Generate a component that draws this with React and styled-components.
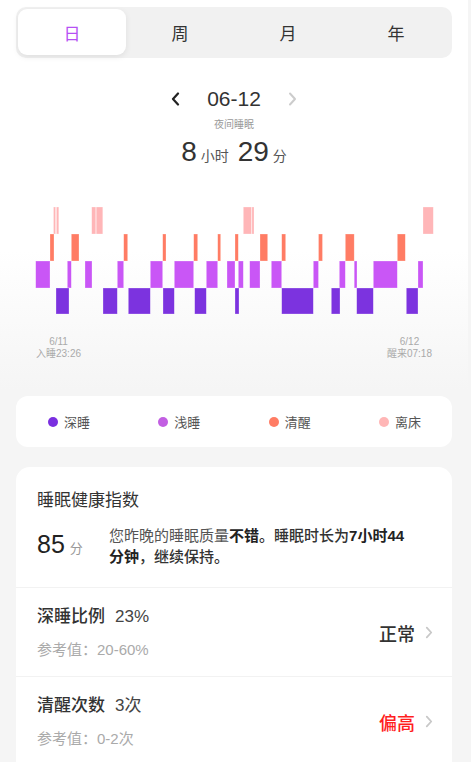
import React from "react";
import styled, { createGlobalStyle } from "styled-components";

const GlobalStyle = createGlobalStyle`
  html, body {
    margin: 0;
    padding: 0;
    background: #f5f5f5;
  }
  body {
    font-family: "Liberation Sans", "Noto Sans CJK SC", sans-serif;
    color: #333;
  }
`;

const Page = styled.div`
  box-sizing: border-box;
  width: 468px;
  min-height: 100vh;
  padding: 7px 16px 0 16px;
  background: linear-gradient(#ffffff 0, #ffffff 250px, #f5f5f5 390px, #f5f5f5 100%);
`;

const TabBar = styled.div`
  display: grid;
  grid-template-columns: repeat(4, 1fr);
  padding: 2px;
  height: 51px;
  box-sizing: border-box;
  background: #f1f1f1;
  border-radius: 10px;
`;

const Tab = styled.div`
  display: flex;
  align-items: center;
  justify-content: center;
  height: 46px;
  font-size: 17px;
  color: ${(props) => (props.active ? "#b650f4" : "#333")};
  background: ${(props) => (props.active ? "#ffffff" : "transparent")};
  border-radius: 9px;
  box-shadow: ${(props) =>
    props.active ? "0 2px 6px rgba(0, 0, 0, 0.08)" : "none"};
`;

const DateRow = styled.div`
  margin-top: 29px;
  height: 24px;
  display: flex;
  align-items: center;
  justify-content: center;
  gap: 27px;
`;

const DateText = styled.div`
  font-size: 21px;
  line-height: 24px;
  color: #333;
`;

const SubTitle = styled.div`
  margin-top: 7px;
  text-align: center;
  font-size: 10px;
  line-height: 14px;
  color: #999;
`;

const Duration = styled.div`
  margin-top: 4px;
  height: 32px;
  display: flex;
  align-items: baseline;
  justify-content: center;
`;

const Num = styled.span`
  font-size: 28px;
  line-height: 32px;
  color: #333;
`;

const Unit = styled.span`
  font-size: 14px;
  color: #555;
  margin: 0 ${(props) => (props.last ? 0 : 9)}px 0 4px;
`;

const Chart = styled.svg`
  display: block;
  margin-top: 32px;
  width: 436px;
  height: 120px;
`;

const AxisRow = styled.div`
  margin-top: 16px;
  display: flex;
  justify-content: space-between;
  padding: 0 20px;
`;

const AxisLabel = styled.div`
  text-align: center;
  font-size: 10px;
  line-height: 12px;
  color: #aaa;
`;

const Legend = styled.div`
  margin-top: 36px;
  height: 51px;
  background: #fff;
  border-radius: 12px;
  display: flex;
  align-items: center;
  justify-content: space-between;
  padding: 0 31px 0 32px;
`;

const LegendItem = styled.div`
  display: flex;
  align-items: center;
  gap: 6px;
  font-size: 13px;
  color: #555;
`;

const Dot = styled.span`
  width: 10px;
  height: 10px;
  border-radius: 50%;
  background: ${(props) => props.color};
`;

const Card = styled.div`
  margin-top: 20px;
  background: #fff;
  border-radius: 14px 14px 0 0;
  padding-bottom: 40px;
`;

const ScoreSection = styled.div`
  padding: 22px 20px 20px 21px;
`;

const CardTitle = styled.div`
  font-size: 17px;
  line-height: 24px;
  color: #333;
`;

const ScoreRow = styled.div`
  margin-top: 12px;
  display: flex;
  align-items: center;
`;

const ScoreValue = styled.div`
  width: 72px;
  flex-shrink: 0;
  font-size: 25px;
  line-height: 28px;
  color: #222;
`;

const ScoreUnit = styled.span`
  font-size: 13px;
  color: #999;
  margin-left: 5px;
`;

const Desc = styled.div`
  width: 305px;
  font-size: 15px;
  line-height: 21px;
  color: #555;

  b {
    color: #222;
    font-weight: 700;
  }
  span {
    color: #333;
    font-weight: 500;
  }
`;

const Row = styled.div`
  border-top: 1px solid #f2f2f2;
  padding: 17px 19px 16px 21px;
  display: flex;
  align-items: center;
  justify-content: space-between;
`;

const RowTitle = styled.div`
  font-size: 17px;
  line-height: 24px;
`;

const RowName = styled.span`
  font-weight: 500;
  color: #333;
`;

const RowValue = styled.span`
  margin-left: 10px;
  color: #444;
`;

const RowRef = styled.div`
  margin-top: 11px;
  font-size: 15px;
  line-height: 20px;
  color: #aaa;
`;

const Status = styled.div`
  display: flex;
  align-items: center;
  gap: 10px;
  font-size: 18px;
  font-weight: 500;
  color: ${(props) => (props.warn ? "#ff1f1f" : "#333")};
`;

const COLORS = {
  out: "#ffb6b8",
  awake: "#ff7c64",
  light: "#c956f6",
  deep: "#7c33df",
};

// [x1, x2] in page pixels
const BARS = {
  out: [
    [53.5, 55.6], [56.4, 58.8], [91.7, 95.8], [96.2, 102.8],
    [243.3, 251.5], [251.9, 254], [423, 433.3],
  ],
  awake: [
    [50, 54], [71.3, 79], [123.7, 127.7], [162.7, 166], [193.7, 197.7],
    [217.7, 220.7], [235, 238.3], [260, 267.7], [281.7, 285.7],
    [318.5, 322.5], [345.3, 354.2], [397.3, 405.3],
  ],
  light: [
    [35.7, 50], [67.3, 71.3], [85, 92], [117.3, 123.7], [150.3, 162.7],
    [174.3, 193.7], [206.3, 217.7], [227, 235], [238.3, 243.3],
    [249.7, 260], [271.3, 281.7], [313.3, 318.5], [339.3, 345.3],
    [354.2, 357], [373.3, 397.3], [418, 423],
  ],
  deep: [
    [56, 69], [103, 117.3], [128.3, 150.3], [163, 174.3], [194.7, 206.3],
    [235, 239], [281.7, 313.3], [331.3, 340], [356.7, 373.3], [406.3, 418],
  ],
};

const ROWS = [
  { key: "out", y: 207, h: 27 },
  { key: "awake", y: 234, h: 27 },
  { key: "light", y: 261, h: 27 },
  { key: "deep", y: 288, h: 26 },
];

const ChevronLeft = ({ color }) => (
  <svg width="9" height="14" viewBox="0 0 9 14">
    <polyline
      points="7,1.5 2,7 7,12.5"
      fill="none"
      stroke={color}
      strokeWidth="2.2"
      strokeLinecap="round"
      strokeLinejoin="round"
    />
  </svg>
);

const ChevronRight = ({ color, width = 9, height = 14 }) => (
  <svg width={width} height={height} viewBox="0 0 9 14">
    <polyline
      points="2,1.5 7,7 2,12.5"
      fill="none"
      stroke={color}
      strokeWidth="2"
      strokeLinecap="round"
      strokeLinejoin="round"
    />
  </svg>
);

const tabs = ["日", "周", "月", "年"];

const legend = [
  { label: "深睡", color: "#7a2fe0" },
  { label: "浅睡", color: "#c25fe2" },
  { label: "清醒", color: "#ff7c64" },
  { label: "离床", color: "#ffb6b6" },
];

export default function App() {
  return (
    <>
      <GlobalStyle />
      <Page>
        <TabBar>
          {tabs.map((t, i) => (
            <Tab key={t} active={i === 0}>
              {t}
            </Tab>
          ))}
        </TabBar>

        <DateRow>
          <ChevronLeft color="#222" />
          <DateText>06-12</DateText>
          <ChevronRight color="#cccccc" />
        </DateRow>
        <SubTitle>夜间睡眠</SubTitle>
        <Duration>
          <Num>8</Num>
          <Unit>小时</Unit>
          <Num>29</Num>
          <Unit last>分</Unit>
        </Duration>

        <Chart viewBox="16 200 436 120">
          {ROWS.map((row) =>
            BARS[row.key].map(([x1, x2], i) => (
              <rect
                key={row.key + i}
                x={x1}
                y={row.y}
                width={x2 - x1}
                height={row.h}
                fill={COLORS[row.key]}
                stroke="rgba(255,255,255,0.45)"
                strokeWidth="0.6"
              />
            ))
          )}
        </Chart>

        <AxisRow>
          <AxisLabel>
            6/11
            <br />
            入睡23:26
          </AxisLabel>
          <AxisLabel>
            6/12
            <br />
            醒来07:18
          </AxisLabel>
        </AxisRow>

        <Legend>
          {legend.map((l) => (
            <LegendItem key={l.label}>
              <Dot color={l.color} />
              {l.label}
            </LegendItem>
          ))}
        </Legend>

        <Card>
          <ScoreSection>
            <CardTitle>睡眠健康指数</CardTitle>
            <ScoreRow>
              <ScoreValue>
                85<ScoreUnit>分</ScoreUnit>
              </ScoreValue>
              <Desc>
                您昨晚的睡眠质量<b>不错</b>
                <span>。睡眠时长为</span>
                <b>7小时44</b>
                <b>分钟</b>
                <span>，继续保持。</span>
              </Desc>
            </ScoreRow>
          </ScoreSection>

          <Row>
            <div>
              <RowTitle>
                <RowName>深睡比例</RowName>
                <RowValue>23%</RowValue>
              </RowTitle>
              <RowRef>参考值：20-60%</RowRef>
            </div>
            <Status>
              正常
              <ChevronRight color="#c8c8c8" width={8} height={13} />
            </Status>
          </Row>

          <Row>
            <div>
              <RowTitle>
                <RowName>清醒次数</RowName>
                <RowValue>3次</RowValue>
              </RowTitle>
              <RowRef>参考值：0-2次</RowRef>
            </div>
            <Status warn>
              偏高
              <ChevronRight color="#c8c8c8" width={8} height={13} />
            </Status>
          </Row>
        </Card>
      </Page>
    </>
  );
}
